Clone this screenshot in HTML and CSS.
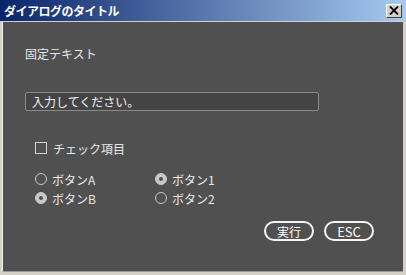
FILE: index.html
```
<!DOCTYPE html>
<html lang="ja">
<head>
<meta charset="utf-8">
<link rel="stylesheet" href="styles.css">
</head>
<body>
<div class="window">
  <div class="titlebar">
    <span class="title">ダイアログのタイトル</span>
    <span class="close"><svg width="10" height="9" viewBox="0 0 10 9"><path d="M1 0.5 L9 8.5 M9 0.5 L1 8.5" stroke="#000" stroke-width="1.8"/></svg></span>
  </div>
  <div class="client">
    <div class="static">固定テキスト</div>
    <div class="input">入力してください。</div>
    <label class="check"><span class="box"></span>チェック項目</label>
    <div class="radios">
      <label class="radio"><span class="dot"></span>ボタンA</label>
      <label class="radio"><span class="dot on"></span>ボタン1</label>
      <label class="radio"><span class="dot on"></span>ボタンB</label>
      <label class="radio"><span class="dot"></span>ボタン2</label>
    </div>
    <div class="buttons">
      <span class="btn">実行</span>
      <span class="btn esc">ESC</span>
    </div>
  </div>
</div>
</body>
</html>
```
FILE: styles.css
```
html, body { margin: 0; padding: 0; }
body { width: 406px; height: 275px; overflow: hidden; background: #d4d0c8; font-family: "Noto Sans CJK JP", "Noto Sans", sans-serif; }
.window { width: 406px; height: 275px; display: flex; flex-direction: column; box-sizing: border-box; }
.titlebar { height: 21px; flex: none; display: flex; align-items: center; justify-content: space-between; padding: 0 4px 0 4px; background: linear-gradient(to right, #0a246a, #a6caf0); border-bottom: 1px solid #d4d0c8; }
.title { color: #fff; font-weight: bold; font-size: 12px; letter-spacing: -0.5px; }
.close { width: 16px; height: 14px; background: #d4d0c8; box-sizing: border-box; border: 1px solid; border-color: #fff #404040 #404040 #fff; display: flex; align-items: center; justify-content: center; }
.client { flex: 1; background: #505050; margin: 0 3px 3px 2px; border-left: 1px solid #f0f0f0; border-bottom: 1px solid #9a9a9a; display: flex; flex-direction: column; padding: 14px 0 0 22px; color: #e8e8e8; font-size: 12px; }
.static { height: 18px; line-height: 18px; margin-top: 9px; }
.input { margin-top: 29px; width: 294px; height: 19px; box-sizing: border-box; background: #444; border: 1px solid #8a8a8a; border-radius: 2px; padding-left: 6px; line-height: 17px; color: #f0f0f0; }
.check { display: flex; align-items: center; margin: 28px 0 0 10px; height: 18px; gap: 6px; }
.box { width: 10px; height: 10px; border: 1px solid #d0d0d0; }
.radios { display: grid; grid-template-columns: 120px 120px; margin: 13px 0 0 10px; row-gap: 1px; }
.radio { display: flex; align-items: center; gap: 5px; height: 18px; }
.dot { width: 10px; height: 10px; border: 1px solid #c8c8c8; border-radius: 50%; box-sizing: content-box; position: relative; }
.dot.on { background: #c8c8c8; }
.dot.on::after { content: ""; position: absolute; left: 3px; top: 3px; width: 4px; height: 4px; border-radius: 50%; background: #505050; }
.buttons { display: flex; gap: 10px; margin: 14px 0 0 239px; }
.btn { width: 50px; height: 20px; box-sizing: border-box; border: 2px solid #f4f4f4; border-radius: 10px; display: flex; align-items: center; justify-content: center; color: #fff; font-size: 12px; }
.btn.esc { font-size: 13px; }
```
